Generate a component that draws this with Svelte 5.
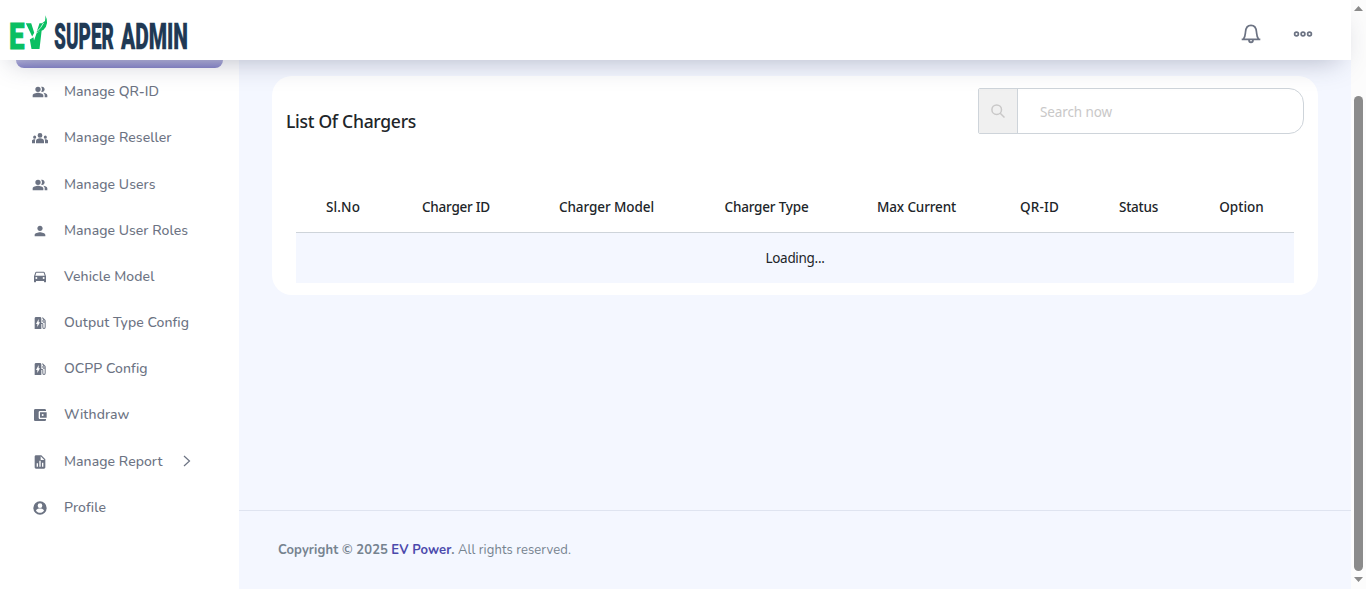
<script>
  const P = {
    people: 'M16.67 13.13C18.04 14.06 19 15.32 19 17v3h4v-3c0-2.18-3.57-3.47-6.33-3.87zM15 12c2.21 0 4-1.79 4-4s-1.79-4-4-4c-.47 0-.91.1-1.33.24C14.5 5.27 15 6.58 15 8s-.5 2.73-1.33 3.76c.42.14.86.24 1.33.24zM9 4a4 4 0 1 0 0 8 4 4 0 0 0 0-8zM9 13c-2.67 0-8 1.34-8 4v3h16v-3c0-2.66-5.33-4-8-4z',
    groups: 'M12 12.5c2.9 0 6 1.4 6 3.9V20H6v-3.600c0-2.500 3.100-3.900 6-3.900zM4 13a2.300 2.300 0 1 0 0-4.600A2.300 2.300 0 0 0 4 13zm1.100.900C2.500 13.500-.500 14.800-.500 17v3h5v-3.600c0-.900.200-1.700.600-2.500zM20 13a2.300 2.300 0 1 0 0-4.600 2.300 2.300 0 0 0 0 4.600zm4.500 4c0-2.200-3-3.500-5.600-3.100.400.800.600 1.600.600 2.500V20h5v-3zM12 4.500a3.600 3.600 0 1 1 0 7.200 3.600 3.600 0 0 1 0-7.200z',
    person: 'M12 12c2.21 0 4-1.79 4-4s-1.79-4-4-4-4 1.79-4 4 1.79 4 4 4zm0 2c-2.67 0-8 1.34-8 4v2h16v-2c0-2.66-5.33-4-8-4z',
    car: 'M18.92 5.01C18.72 4.42 18.16 4 17.5 4h-11c-.66 0-1.21.42-1.42 1.01L3 11v8c0 .55.45 1 1 1h1c.55 0 1-.45 1-1v-1h12v1c0 .55.45 1 1 1h1c.55 0 1-.45 1-1v-8l-2.080-5.990zM6.500 15a1.500 1.500 0 1 1 0-3 1.500 1.500 0 0 1 0 3zm11 0a1.500 1.500 0 1 1 0-3 1.500 1.500 0 0 1 0 3zM5 10l1.500-4.500h11L19 10H5z',
    ev: 'M19.770 7.230l.010-.010-3.720-3.720L15 4.560l2.110 2.110c-.940.360-1.610 1.260-1.610 2.330a2.500 2.500 0 0 0 3.500 2.290v7.210c0 .550-.450 1-1 1s-1-.450-1-1V14c0-1.100-.900-2-2-2h-1V5c0-1.100-.900-2-2-2H6c-1.100 0-2 .900-2 2v16h10v-7.500h1.500v5a2.500 2.500 0 0 0 5 0V9c0-.690-.280-1.320-.730-1.770zM18 10a1 1 0 1 1 0-2 1 1 0 0 1 0 2zM8 18v-4.500H6L10 6v5h2l-4 7z',
    wallet: 'M21 18v1c0 1.100-.900 2-2 2H5c-1.110 0-2-.900-2-2V5c0-1.100.890-2 2-2h14c1.100 0 2 .900 2 2v1h-9c-1.110 0-2 .900-2 2v8c0 1.100.890 2 2 2h9zm-9-2h10V8H12v8zm4-2.500a1.500 1.500 0 1 1 0-3 1.500 1.500 0 0 1 0 3z',
    report: 'M14 2H6c-1.100 0-2 .900-2 2v16c0 1.100.890 2 2 2h12c1.100 0 2-.900 2-2V8l-6-6zM9 19H7v-5h2v5zm4 0h-2v-9h2v9zm4 0h-2v-6h2v6zM13 9V3.500L18.500 9H13z',
    account: 'M12 2a10 10 0 1 0 0 20 10 10 0 0 0 0-20zM12 5a3.500 3.500 0 1 1 0 7 3.500 3.500 0 0 1 0-7zm0 14.200c-2.500 0-4.700-1.300-6-3.200 0-2 4-3.100 6-3.100s6 1.100 6 3.100c-1.300 1.900-3.500 3.200-6 3.200z'
  };
  const menu = [
    ['Manage QR-ID', 'people', 95], ['Manage Reseller', 'groups', 107.5], ['Manage Users', 'people', 91.5],
    ['Manage User Roles', 'person', 124], ['Vehicle Model', 'car', 90.5], ['Output Type Config', 'ev', 125],
    ['OCPP Config', 'ev', 83.5], ['Withdraw', 'wallet', 65.5], ['Manage Report', 'report', 98.5], ['Profile', 'account', 42]
  ];
  const columns = [
    ['Sl.No', 34, 94], ['Charger ID', 68, 132], ['Charger Model', 95, 169], ['Charger Type', 84, 151],
    ['Max Current', 79, 149], ['QR-ID', 39, 97], ['Status', 39, 101], ['Option', 44.500, 105]
  ];

  // Tracks the text so that it fills the given width.
  function fit(node, width) {
    const w = node.getBoundingClientRect().width;
    node.style.letterSpacing = (width - w) / node.textContent.length + 'px';
  }
</script>

<div class="page">
  <header>
    <svg class="logo" width="210" height="50" viewBox="2 8 210 50" aria-label="EV Super Admin">
      <text class="ev" x="9" y="48.800" textLength="15.500" lengthAdjust="spacingAndGlyphs">E</text>
      <path d="M25.800 23.300h5.400l3 9.500-2 3.700zM29.800 39.500l3.700-2.200.5 3.200 2.700-7.500 5-3L39.500 49h-8z" fill="#0abf62" />
      <path d="M36.500 32.500l3-9.200h2.500l3-2.300q.700-2.500.300-5.700 4.500 8.700-2 14.700-3 1-6.800 2.500z" fill="#0abf62" />
      <path d="M37 31.500Q41 28 43.500 23" stroke="#fff" stroke-width=".8" fill="none" />
      <text class="name" x="54" y="48.800" textLength="60" lengthAdjust="spacingAndGlyphs">SUPER</text>
      <text class="name" x="121" y="48.800" textLength="67" lengthAdjust="spacingAndGlyphs">ADMIN</text>
    </svg>
    <div class="actions">
      <svg width="20" height="20" viewBox="0 0 20 20" fill="none" stroke="#6c7383" stroke-width="1.700">
        <path d="M.700 15.300h18.600M2.500 15c1.700-2 1.700-3.800 2-7C4.800 3.500 6.400 1.300 10 1.300S15.200 3.500 15.500 8c.300 3.200.300 5 2 7M8 15.500v.800a2 2 0 0 0 4 0v-.800" />
      </svg>
      <svg width="20" height="8" viewBox="0 0 20 8" fill="none" stroke="#6c7383" stroke-width="1.700">
        <circle cx="3.500" cy="4" r="1.900" /><circle cx="10" cy="4" r="1.900" /><circle cx="16.500" cy="4" r="1.900" />
      </svg>
    </div>
  </header>
  <div class="body">
    <nav>
      <div class="active"></div>
      <ul>
        {#each menu as [label, icon, width]}
          <li>
            <svg class="icon" width="16" height="16" viewBox="0 0 24 24"><path fill-rule="evenodd" d={P[icon]} /></svg>
            <span use:fit={width}>{label}</span>
            {#if icon === 'report'}
              <svg class="chev" width="8" height="12" viewBox="0 0 8 12" fill="none" stroke="#6c7383" stroke-width="1.200"><path d="M1 1l5.500 5L1 11" /></svg>
            {/if}
          </li>
        {/each}
      </ul>
    </nav>
    <main>
      <section class="card">
        <div class="top">
          <h4><span use:fit={130}>List Of Chargers</span></h4>
          <div class="search">
            <div class="glass">
              <svg width="14" height="14" viewBox="0 0 14 14" fill="none" stroke="#c9c8c8" stroke-width="1.500"><circle cx="5.700" cy="5.700" r="4.800" /><path d="M9.200 9.200l4.300 4.300" /></svg>
            </div>
            <div class="field"><span use:fit={72}>Search now</span></div>
          </div>
        </div>
        <table>
          <colgroup>{#each columns as c}<col style:width="{c[2]}px" />{/each}</colgroup>
          <thead><tr>{#each columns as [label, width]}<th><span use:fit={width}>{label}</span></th>{/each}</tr></thead>
          <tbody><tr><td colspan="8"><span use:fit={59}>Loading...</span></td></tr></tbody>
        </table>
      </section>
      <footer>
        <b><span use:fit={110}>Copyright © 2025</span></b>&nbsp;<b class="brand"><span use:fit={60}>EV Power</span></b><b>.</b>&nbsp;<span use:fit={113}>All rights reserved.</span>
      </footer>
    </main>
    <div class="scroll">
      <svg width="15" height="589" viewBox="0 0 15 589" fill="#8b8b8b"><path d="M3 11l4.500-5 4.500 5zM3 577l4.500 5 4.500-5z" /><rect x="3" y="96" width="9" height="475" rx="4.500" /></svg>
    </div>
  </div>
</div>

<style>
  :global(body) { margin: 0; overflow: hidden; }
  .page { height: 589px; background: #f4f7ff; font-family: 'Noto Sans', sans-serif; color: #212529; }
  .page * { box-sizing: border-box; }
  span { white-space: nowrap; display: inline-block; }
  svg { display: block; flex: none; }
  header {
    position: relative; z-index: 2; width: 1351px; height: 60px; padding: 0 38px 0 2px; background: #fff;
    display: flex; justify-content: space-between; align-items: center;
    box-shadow: 0 12px 28px -12px rgba(50, 55, 90, 0.36);
  }
  .logo { margin-top: 6px; }
  .ev { font: 900 36.500px Roboto, sans-serif; fill: #0abf62; stroke: #0abf62; stroke-width: 0.900; }
  .name { font: 900 36px Roboto, sans-serif; fill: #203954; stroke: #203954; stroke-width: 0.300; }
  .actions { display: flex; align-items: center; gap: 32px; margin-top: 8px; }
  .body { display: flex; height: 529px; }
  nav { width: 239px; background: #fff; padding-left: 16px; }
  .active { width: 207px; height: 8px; background: linear-gradient(#b6b5de, #8785c8); border-radius: 0 0 8px 8px; }
  ul { list-style: none; margin: 0; padding: 0.550px 0 0 16px; }
  li { height: 46.200px; display: flex; align-items: center; color: #6c7383; font: 500 14px Nunito, 'Noto Sans', sans-serif; }
  .icon { fill: #6c7383; margin: 1px 16px 0 0; }
  .chev { margin-left: 20.500px; }
  main { width: 1112px; display: flex; flex-direction: column; }
  .card { margin: 16px 33px 0; height: 219px; padding: 12px 14px 0; background: #fff; border-radius: 20px; }
  .top { display: flex; justify-content: space-between; }
  h4 { margin: 21px 0 0; font-size: 17.500px; line-height: 25px; font-weight: 500; }
  .search { width: 326px; height: 46px; display: flex; border: 1px solid #ced4da; border-radius: 2px 15px 15px 2px; overflow: hidden; }
  .glass { width: 39px; background: #f0f0f0; border-right: 1px solid #ced4da; display: flex; align-items: center; justify-content: center; }
  .field { padding: 2px 0 0 22px; font-size: 13.500px; color: #c9c8c8; display: flex; align-items: center; }
  table { width: 998px; margin: 48px 10px 0; table-layout: fixed; border-collapse: separate; border-spacing: 0; font-size: 13.500px; }
  th { height: 51px; padding: 0 0 1px; font-weight: 500; border-bottom: 1px solid #ced4da; }
  td { height: 50px; padding: 0; text-align: center; background: #f4f7ff; }
  footer { margin-top: auto; height: 79px; border-top: 1px solid #dfe4f0; padding: 0 39px 1px; display: flex; align-items: center; color: #76838f; font: 400 13px Nunito, sans-serif; }
  b { font-weight: 700; }
  .brand { color: #4b49ac; }
  .scroll { width: 15px; height: 589px; margin-top: -60px; background: #fcfcfc; }
</style>
